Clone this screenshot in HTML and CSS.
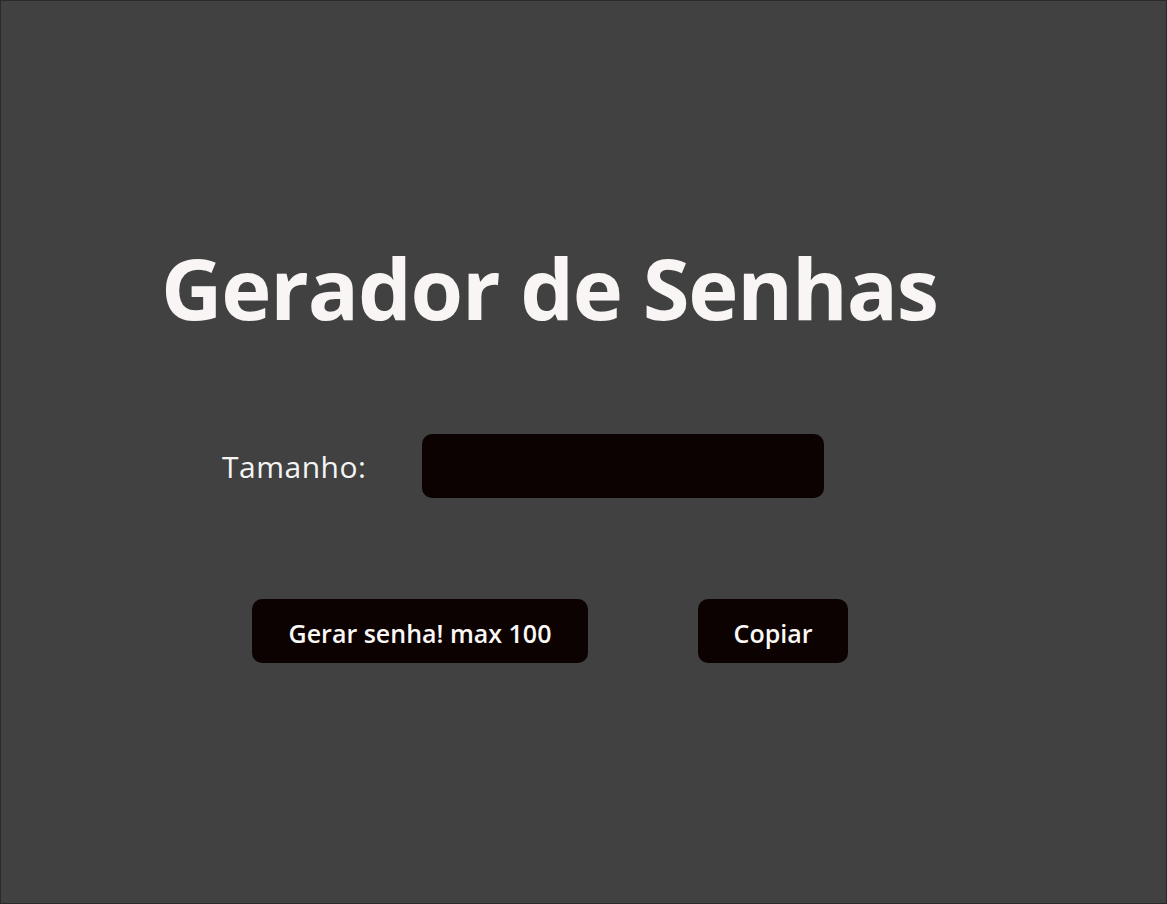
FILE: index.html
```html
<!DOCTYPE html>
<html lang="pt-BR">
<head>
<meta charset="utf-8">
<title>Gerador de Senhas</title>
<link rel="stylesheet" href="styles.css">
</head>
<body>
<main class="app">
  <h1 class="title">Gerador de Senhas</h1>
  <div class="size-row">
    <label class="size-label" for="tamanho">Tamanho:</label>
    <input class="size-input" id="tamanho" type="text">
  </div>
  <div class="actions">
    <button class="btn btn-generate">Gerar senha! max 100</button>
    <button class="btn btn-copy">Copiar</button>
  </div>
</main>
</body>
</html>
```

FILE: styles.css
```css
html, body {
  margin: 0;
  padding: 0;
}
body {
  box-sizing: border-box;
  height: 904px;
  background: #414141;
  border: 1px solid #2a2a2a;
  font-family: "Open Sans", "Noto Sans", sans-serif;
  color: #f7f3f2;
}
.app {
  display: flex;
  flex-direction: column;
  padding-top: 232px;
  padding-left: 160px;
}
.title {
  margin: 0;
  font-size: 85px;
  font-weight: 700;
  line-height: 108px;
  letter-spacing: -1.2px;
  color: #f8f5f4;
}
.size-row {
  display: flex;
  align-items: center;
  gap: 55px;
  margin-top: 93px;
  padding-left: 61px;
}
.size-label {
  font-size: 30px;
  letter-spacing: 0.5px;
  color: #f4f4f4;
  width: 145px;
  white-space: nowrap;
}
.size-input {
  box-sizing: border-box;
  width: 402px;
  height: 64px;
  border: none;
  border-radius: 10px;
  background: #0c0202;
  color: #fff;
  outline: none;
}
.actions {
  display: flex;
  gap: 110px;
  margin-top: 101px;
  padding-left: 91px;
}
.btn {
  box-sizing: border-box;
  height: 64px;
  padding: 4px 0 0;
  border: none;
  border-radius: 10px;
  background: #0c0202;
  color: #fbf8f6;
  font-family: "Open Sans", "Noto Sans", sans-serif;
  font-size: 25px;
  font-weight: 600;
}
.btn-generate {
  width: 336px;
}
.btn-copy {
  width: 150px;
}
```
